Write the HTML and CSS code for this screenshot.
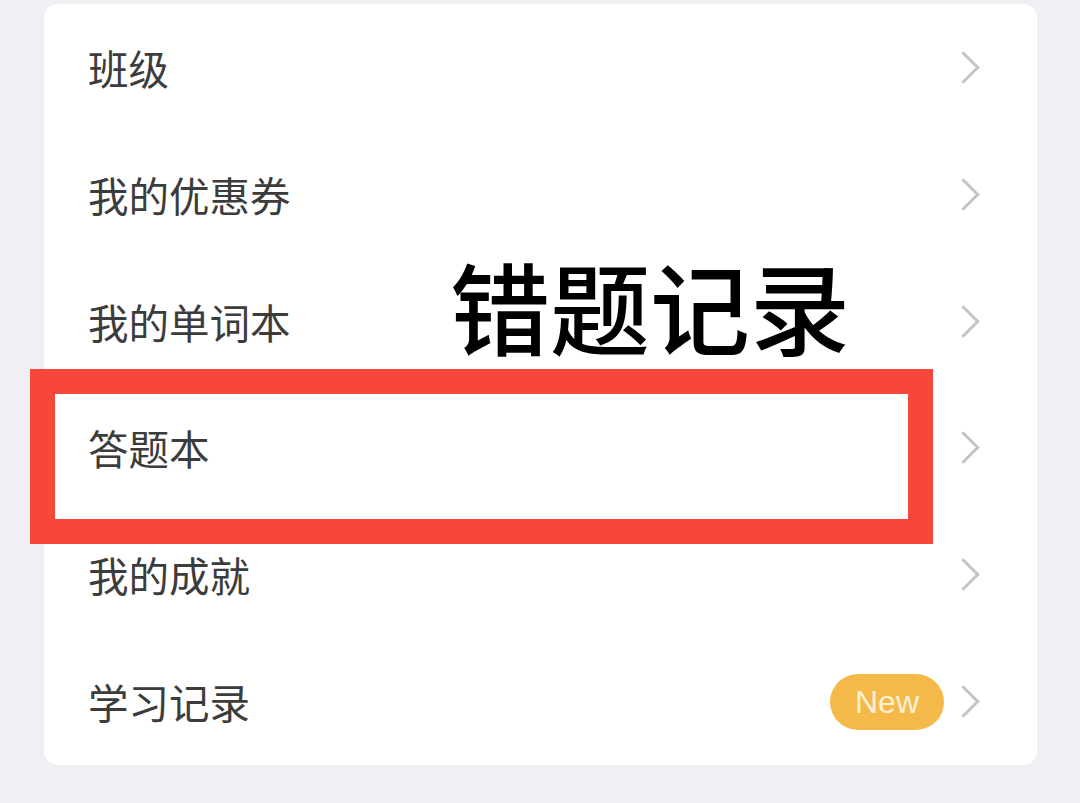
FILE: index.html
```html
<!DOCTYPE html>
<html lang="zh-CN">

<head>
    <meta charset="UTF-8">
    <title>我的</title>
    <link rel="stylesheet" href="styles.css">
</head>

<body>
    <div class="card">
        <div class="row"><span class="label">班级</span><span class="arrow"></span></div>
        <div class="row"><span class="label">我的优惠券</span><span class="arrow"></span></div>
        <div class="row"><span class="label">我的单词本</span><span class="arrow"></span></div>
        <div class="row"><span class="label">答题本</span><span class="arrow"></span></div>
        <div class="row"><span class="label">我的成就</span><span class="arrow"></span></div>
        <div class="row"><span class="label">学习记录</span><span class="badge">New</span><span class="arrow"></span></div>
    </div>

    <div class="note">错题记录</div>
    <div class="mark"></div>
</body>

</html>
```

FILE: styles.css
```css
html {
    background: #efeff4;
}
body {
    margin: 0;
    padding: 4px 0 0 44px;
    height: 803px;
    box-sizing: border-box;
    position: relative;
    font-family: "Noto Sans CJK SC", "Noto Sans", sans-serif;
}
.card {
    width: 993px;
    height: 761px;
    background: #fff;
    border-radius: 14px;
    display: flex;
    flex-direction: column;
}
.row {
    flex: 1;
    display: flex;
    align-items: center;
    padding: 0 56px 0 44px;
}
.label {
    flex: 1;
    font-size: 40.5px;
    color: #3c3c3c;
}
.arrow {
    width: 20px;
    height: 20px;
    border-top: 3px solid #c4c4c6;
    border-right: 3px solid #c4c4c6;
    transform: rotate(45deg);
    margin-right: 6px;
}
.badge {
    background: #f5b94a;
    color: #fdf0d6;
    font-family: "Liberation Sans", Arial, sans-serif;
    font-size: 32px;
    line-height: 56px;
    height: 56px;
    padding: 0 25px;
    border-radius: 28px;
    margin-right: 8px;
}
.note {
    position: absolute;
    left: 450px;
    top: 242px;
    font-size: 100px;
    line-height: 1.25;
    font-weight: 500;
    color: #000;
}
.mark {
    position: absolute;
    left: 30px;
    top: 369px;
    width: 853px;
    height: 125px;
    border: 25px solid #f6473a;
}
```
